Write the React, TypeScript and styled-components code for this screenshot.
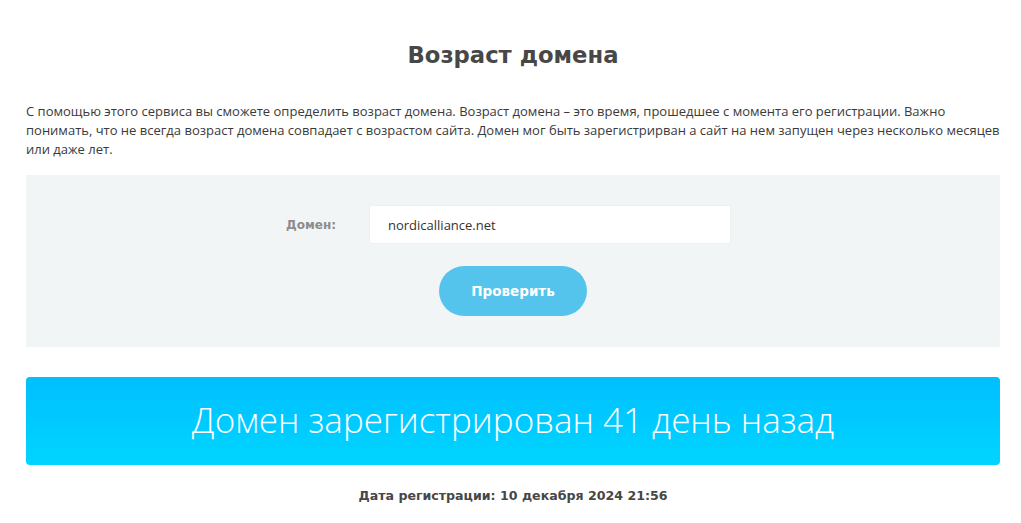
import React from "react";
import styled, { createGlobalStyle } from "styled-components";

const GlobalStyle = createGlobalStyle`
  html, body {
    margin: 0;
    padding: 0;
    background: #fff;
  }
  body {
    font-family: "Open Sans", "Liberation Sans", sans-serif;
    color: #333;
  }
`;

const App = () => {
  return (
    <>
      <GlobalStyle />
      <Page>
        <Title>Возраст домена</Title>
        <Intro>
          С помощью этого сервиса вы сможете определить возраст домена. Возраст
          домена – это время, прошедшее с момента его регистрации. Важно
          понимать, что не всегда возраст домена совпадает с возрастом сайта.
          Домен мог быть зарегистрирван а сайт на нем запущен через несколько
          месяцев или даже лет.
        </Intro>
        <FormPanel>
          <FieldRow>
            <Label>Домен:</Label>
            <Input defaultValue="nordicalliance.net" />
          </FieldRow>
          <Button>Проверить</Button>
        </FormPanel>
        <Result>Домен зарегистрирован 41 день назад</Result>
        <RegDate>Дата регистрации: 10 декабря 2024 21:56</RegDate>
      </Page>
    </>
  );
};

const Page = styled.div`
  width: 974px;
  margin-left: 26px;
  padding-top: 38px;
`;

const Title = styled.h1`
  margin: 0;
  text-align: center;
  font-family: "DejaVu Sans", sans-serif;
  font-weight: 700;
  font-size: 22.7px;
  line-height: 34px;
  color: #474747;
`;

const Intro = styled.p`
  margin: 30px 0 0;
  font-size: 13px;
  line-height: 19px;
  color: #3a3a3a;
`;

const FormPanel = styled.div`
  margin-top: 16px;
  background: #f2f5f6;
  padding: 30px 0 31px;
  display: flex;
  flex-direction: column;
  align-items: center;
`;

const FieldRow = styled.div`
  display: flex;
  align-items: center;
  margin-right: 9px;
`;

const Label = styled.label`
  width: 83px;
  font-family: "DejaVu Sans", sans-serif;
  font-weight: 700;
  font-size: 12px;
  color: #8c8c8c;
`;

const Input = styled.input`
  box-sizing: border-box;
  width: 362px;
  height: 39px;
  border: 1px solid #eef0f1;
  border-radius: 2px;
  background: #fff;
  padding: 0 18px;
  font-family: "Open Sans", sans-serif;
  font-size: 13px;
  color: #333;
  outline: none;
`;

const Button = styled.button`
  margin-top: 22px;
  width: 148px;
  height: 50px;
  border: none;
  border-radius: 25px;
  background: #55c4ec;
  color: #fff;
  font-family: "DejaVu Sans", sans-serif;
  font-weight: 700;
  font-size: 13.5px;
  cursor: pointer;
`;

const Result = styled.div`
  margin-top: 30px;
  box-sizing: border-box;
  height: 88px;
  padding-bottom: 4px;
  border-radius: 4px;
  background: linear-gradient(180deg, #00bfff 0%, #00d5ff 100%);
  display: flex;
  align-items: center;
  justify-content: center;
  color: #fff;
  font-family: "Open Sans", sans-serif;
  font-weight: 300;
  font-size: 35px;
`;

const RegDate = styled.div`
  margin-top: 23px;
  text-align: center;
  font-family: "DejaVu Sans", sans-serif;
  font-weight: 700;
  font-size: 12.6px;
  color: #474747;
`;

export default App;
